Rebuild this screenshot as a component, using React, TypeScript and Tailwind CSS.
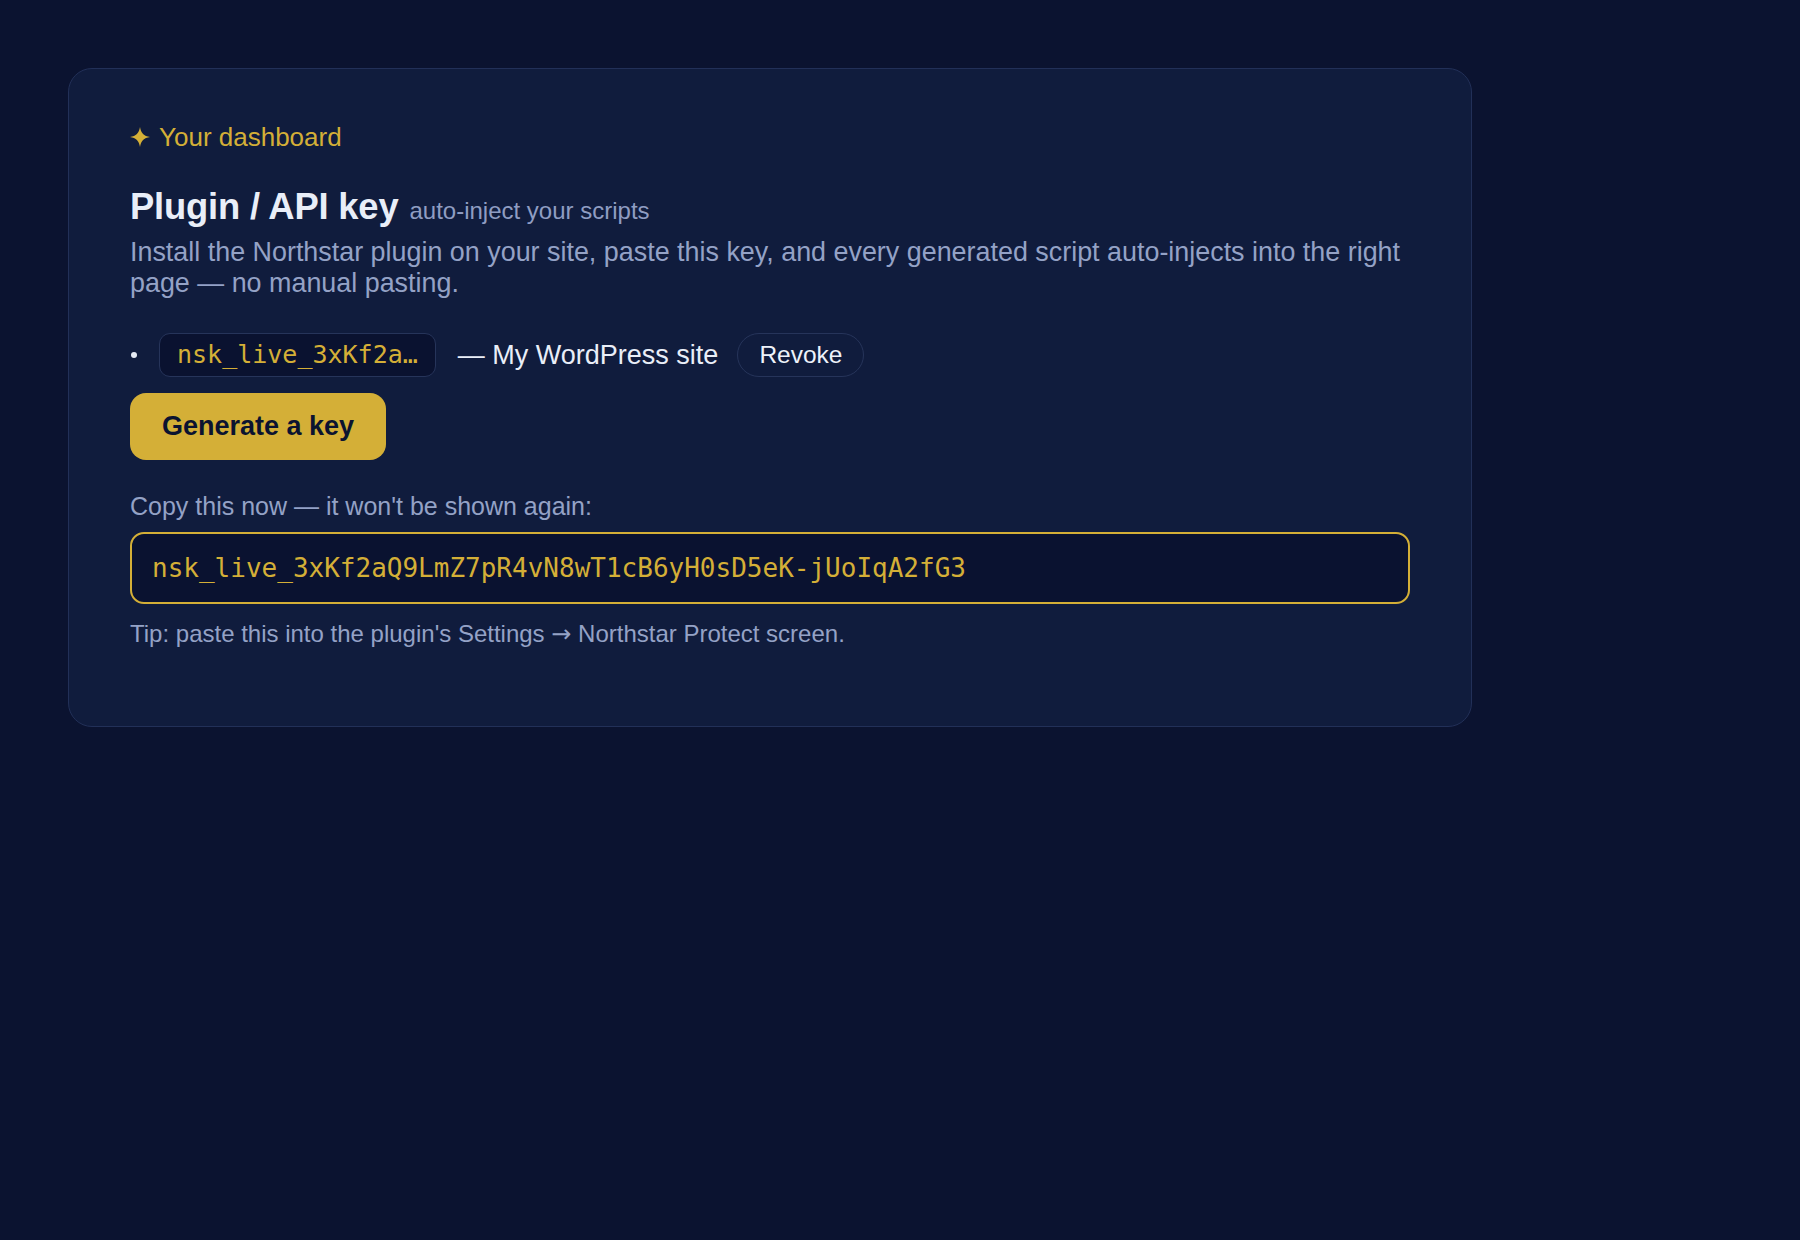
const sans = { fontFamily: '"Liberation Sans", Arial, sans-serif' };
const mono = { fontFamily: '"DejaVu Sans Mono", "Liberation Mono", monospace' };

const FULL_KEY = "nsk_live_3xKf2aQ9LmZ7pR4vN8wT1cB6yH0sD5eK-jUoIqA2fG3";

const Sparkle = () => (
  <svg width="20" height="20" viewBox="0 0 20 20" className="shrink-0">
    <path
      d="M10 0C10.9 6 13.9 9.1 20 10C13.9 10.9 10.9 14 10 20C9.1 14 6.1 10.9 0 10C6.1 9.1 9.1 6 10 0Z"
      fill="#d4af37"
    />
  </svg>
);

export default function App() {
  return (
    <div className="min-h-[1240px] w-full bg-[#0b1330] pt-[68px] pl-[68px]" style={sans}>
      {/* card */}
      <div className="w-[1404px] rounded-[24px] border border-[#223058] bg-[#101c3d] pt-[53px] pb-[77px] px-[61px]">
        {/* eyebrow */}
        <div className="flex items-center gap-[9px] text-[26px] leading-[30px] text-[#d4af37]">
          <Sparkle />
          <span>Your dashboard</span>
        </div>

        {/* heading */}
        <div className="mt-[34px] flex items-baseline gap-[11px]">
          <h2 className="text-[36.4px] leading-[42px] font-bold text-[#e9eef8] tracking-[-0.2px]">
            Plugin / API key
          </h2>
          <span className="text-[24px] text-[#8f9dc2]">auto-inject your scripts</span>
        </div>
        <p className="mt-[8px] text-[26.9px] leading-[31px] text-[#94a2c6]">
          Install the Northstar plugin on your site, paste this key, and every generated script
          auto-injects into the right page — no manual pasting.
        </p>

        {/* key list */}
        <div className="mt-[34px] flex items-center gap-[22px]">
          <span className="ml-[1px] h-[6px] w-[6px] rounded-full bg-[#e6ebf5]" />
          <span
            className="flex h-[44px] items-center rounded-[11px] border border-[#26345a] bg-[#0a1230] px-[17px] text-[25px] text-[#d4af37]"
            style={mono}
          >
            nsk_live_3xKf2a…
          </span>
          <span className="text-[27px] text-[#e9eef8]">— My WordPress site</span>
          <button className="-ml-[3px] h-[44px] rounded-full border border-[#26345a] px-[21px] text-[24.5px] text-[#eef2fa]">
            Revoke
          </button>
        </div>

        <button className="mt-[16px] h-[67px] rounded-[16px] bg-[#d4af37] px-[32px] text-[27px] font-bold text-[#0b1330]">
          Generate a key
        </button>

        {/* new key */}
        <div className="mt-[31px] text-[25px] leading-[30px] text-[#94a2c6]">
          Copy this now — it won't be shown again:
        </div>
        <div className="mt-[11px] flex h-[72px] items-center rounded-[14px] border-2 border-[#d4af37] bg-[#0a1230] px-[20px]">
          <span className="text-[26px] text-[#d4af37]" style={mono}>
            {FULL_KEY}
          </span>
        </div>
        <div className="mt-[15px] text-[24px] leading-[29px] text-[#94a2c6]">
          Tip: paste this into the plugin's Settings{" "}
          <span style={{ fontFamily: '"DejaVu Sans", sans-serif' }}>→</span> Northstar Protect
          screen.
        </div>
      </div>
    </div>
  );
}
